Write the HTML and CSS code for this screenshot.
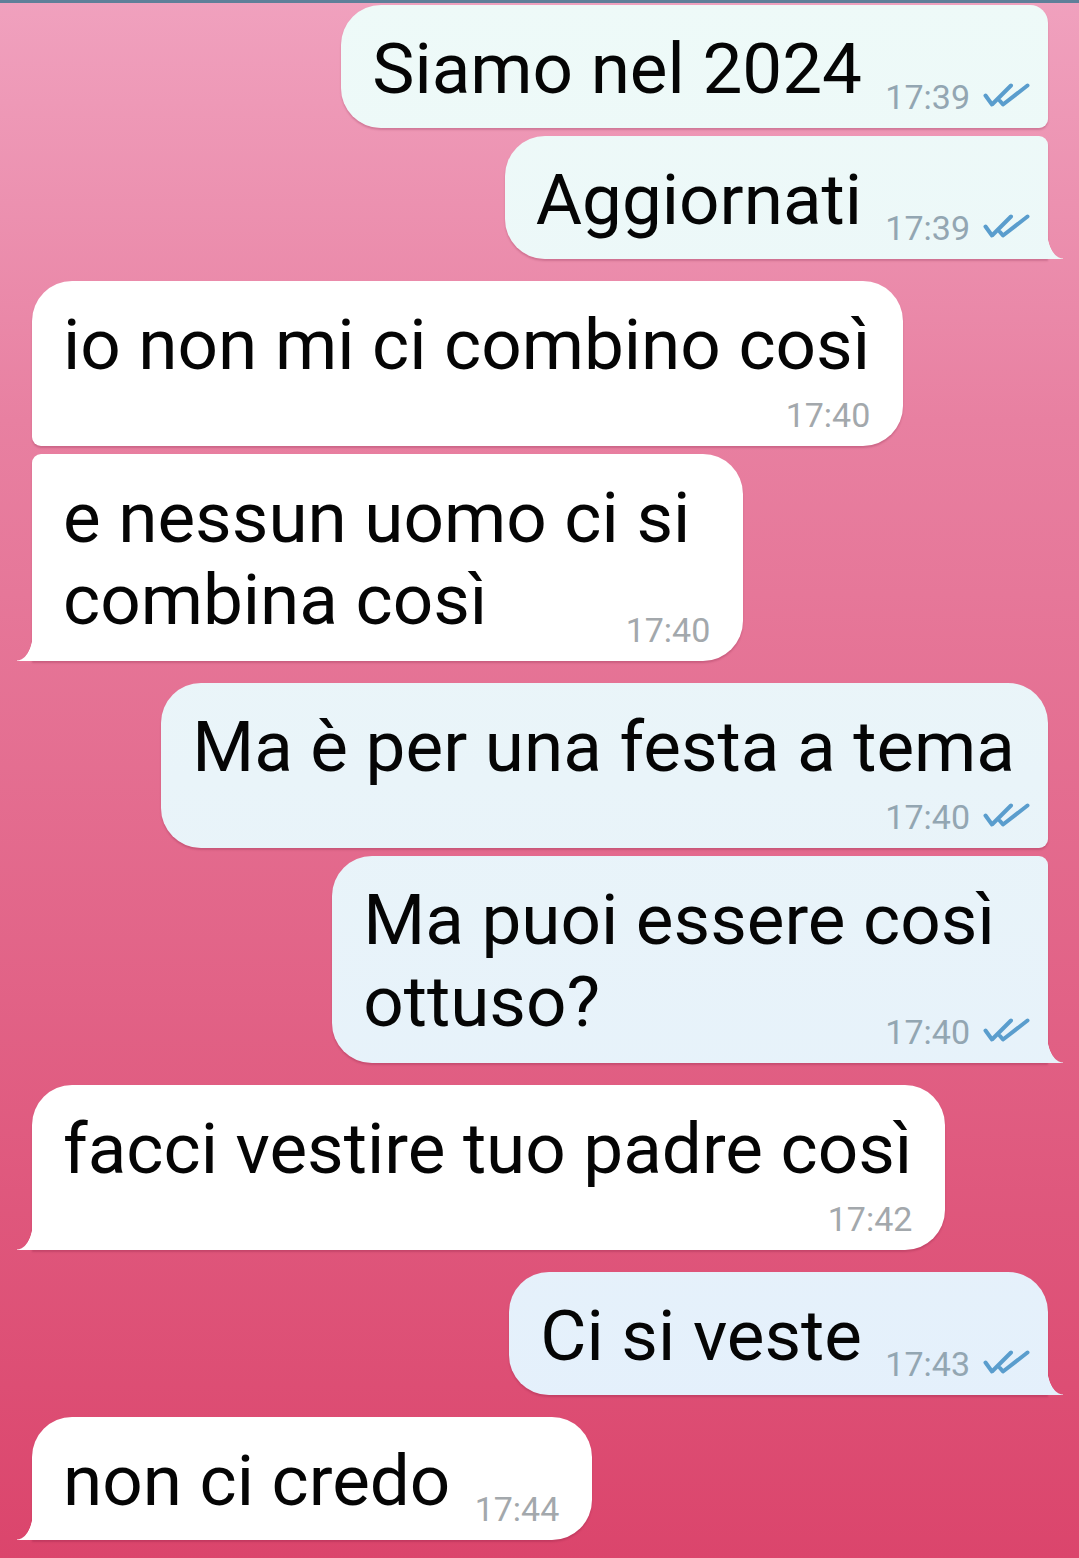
FILE: index.html
```html
<!DOCTYPE html>
<html lang="it">
<head>
  <meta charset="UTF-8">
  <title>Chat</title>
  <link rel="stylesheet" href="styles.css">
</head>
<body>
  <div class="status-bar"></div>

  <div class="chat">
    <div class="group out">
      <div class="bubble inline cont">
        <div class="text">Siamo nel 2024<span class="spacer"></span></div>
        <div class="meta"><span class="time">17:39</span><svg class="checks" viewBox="0 0 47 24" width="47" height="24"><path d="M2.5 12.5L9 21.5L28 2.5M17 18L20 21.5L44.5 2.5"/></svg></div>
      </div>
      <div class="bubble inline last">
        <div class="text">Aggiornati<span class="spacer"></span></div>
        <div class="meta"><span class="time">17:39</span><svg class="checks" viewBox="0 0 47 24" width="47" height="24"><path d="M2.5 12.5L9 21.5L28 2.5M17 18L20 21.5L44.5 2.5"/></svg></div>
      </div>
    </div>

    <div class="group in">
      <div class="bubble first">
        <div class="text">io non mi ci combino così</div>
        <div class="meta"><span class="time">17:40</span></div>
      </div>
      <div class="bubble inline wrapped last">
        <div class="text">e nessun uomo ci si<br>combina così<span class="spacer"></span></div>
        <div class="meta"><span class="time">17:40</span></div>
      </div>
    </div>

    <div class="group out">
      <div class="bubble first">
        <div class="text">Ma è per una festa a tema</div>
        <div class="meta"><span class="time">17:40</span><svg class="checks" viewBox="0 0 47 24" width="47" height="24"><path d="M2.5 12.5L9 21.5L28 2.5M17 18L20 21.5L44.5 2.5"/></svg></div>
      </div>
      <div class="bubble inline wrapped last">
        <div class="text">Ma puoi essere così<br>ottuso?<span class="spacer"></span></div>
        <div class="meta"><span class="time">17:40</span><svg class="checks" viewBox="0 0 47 24" width="47" height="24"><path d="M2.5 12.5L9 21.5L28 2.5M17 18L20 21.5L44.5 2.5"/></svg></div>
      </div>
    </div>

    <div class="group in">
      <div class="bubble first last">
        <div class="text">facci vestire tuo padre così</div>
        <div class="meta"><span class="time">17:42</span></div>
      </div>
    </div>

    <div class="group out">
      <div class="bubble inline first last">
        <div class="text">Ci si veste<span class="spacer"></span></div>
        <div class="meta"><span class="time">17:43</span><svg class="checks" viewBox="0 0 47 24" width="47" height="24"><path d="M2.5 12.5L9 21.5L28 2.5M17 18L20 21.5L44.5 2.5"/></svg></div>
      </div>
    </div>

    <div class="group in">
      <div class="bubble inline first last">
        <div class="text">non ci credo<span class="spacer"></span></div>
        <div class="meta"><span class="time">17:44</span></div>
      </div>
    </div>
  </div>
</body>
</html>
```

FILE: styles.css
```css
body {
  margin: 0;
  padding: 0;
  height: 1558px;
  overflow: hidden;
  font-family: Roboto, 'Noto Sans', sans-serif;
  background: linear-gradient(180deg, #f0a1be 0%, #e880a1 27%, #db456c 100%);
}

.status-bar {
  height: 3px;
  background: #5f7f99;
}

.chat {
  display: flex;
  flex-direction: column;
  gap: 22px;
  padding: 2px 31px 0 32px;
}

.group {
  display: flex;
  flex-direction: column;
  gap: 8px;
}

.group.out {
  align-items: flex-end;
}

.group.in {
  align-items: flex-start;
}

.bubble {
  position: relative;
  display: flex;
  flex-direction: column;
  padding: 23px 33px 11px 31px;
  box-shadow: 0 2px 2px rgba(110, 20, 50, 0.22);
}

.bubble.wrapped {
  padding-right: 53px;
}

.out .bubble {
  background: linear-gradient(180deg, #eefaf8 0%, #e9f4f9 50%, #e3effc 100%) fixed;
  border-radius: 40px 9px 9px 40px;
}

.out .bubble.first {
  border-top-right-radius: 40px;
}

.out .bubble.cont {
  border-top-right-radius: 18px;
}

.in .bubble {
  background: #ffffff;
  border-radius: 9px 40px 40px 9px;
}

.in .bubble.first {
  border-top-left-radius: 40px;
}

.text {
  font-size: 71px;
  line-height: 82px;
  color: #050505;
  white-space: nowrap;
}

.spacer {
  display: inline-block;
  height: 1px;
}

.out .spacer {
  width: 153px;
}

.in .spacer {
  width: 109px;
}

.meta {
  align-self: flex-end;
  display: flex;
  align-items: center;
  margin-top: 9px;
  line-height: 40px;
  font-size: 34px;
}

.bubble.inline .meta {
  margin-top: -33px;
}

.bubble.wrapped .meta {
  margin-top: -31px;
}

.out .meta {
  margin-right: -15px;
  color: #93a6b2;
}

.out .wrapped .meta {
  margin-right: -35px;
}

.in .meta {
  color: #a3a8ac;
}

.in .wrapped .meta {
  margin-right: -20px;
}

.time {
  margin-right: 13px;
}

.in .time {
  margin-right: 0;
}

.checks {
  margin-bottom: 5px;
  fill: none;
  stroke: #5a9dcd;
  stroke-width: 4;
  stroke-linecap: round;
  stroke-linejoin: round;
}

/* tail of the last bubble in a group */
.bubble.last::after {
  content: "";
  position: absolute;
  bottom: 0;
  width: 16px;
  height: 28px;
}

.out .bubble.last {
  border-bottom-right-radius: 0;
}

.out .bubble.last::after {
  right: -15px;
  background: linear-gradient(180deg, #eefaf8 0%, #e9f4f9 50%, #e3effc 100%) fixed;
  -webkit-mask: radial-gradient(ellipse 16px 28px at 100% 0, transparent 96%, #000 100%);
  mask: radial-gradient(ellipse 16px 28px at 100% 0, transparent 96%, #000 100%);
}

.in .bubble.last {
  border-bottom-left-radius: 0;
}

.in .bubble.last::after {
  left: -15px;
  background: #ffffff;
  -webkit-mask: radial-gradient(ellipse 16px 28px at 0 0, transparent 96%, #000 100%);
  mask: radial-gradient(ellipse 16px 28px at 0 0, transparent 96%, #000 100%);
}
```
